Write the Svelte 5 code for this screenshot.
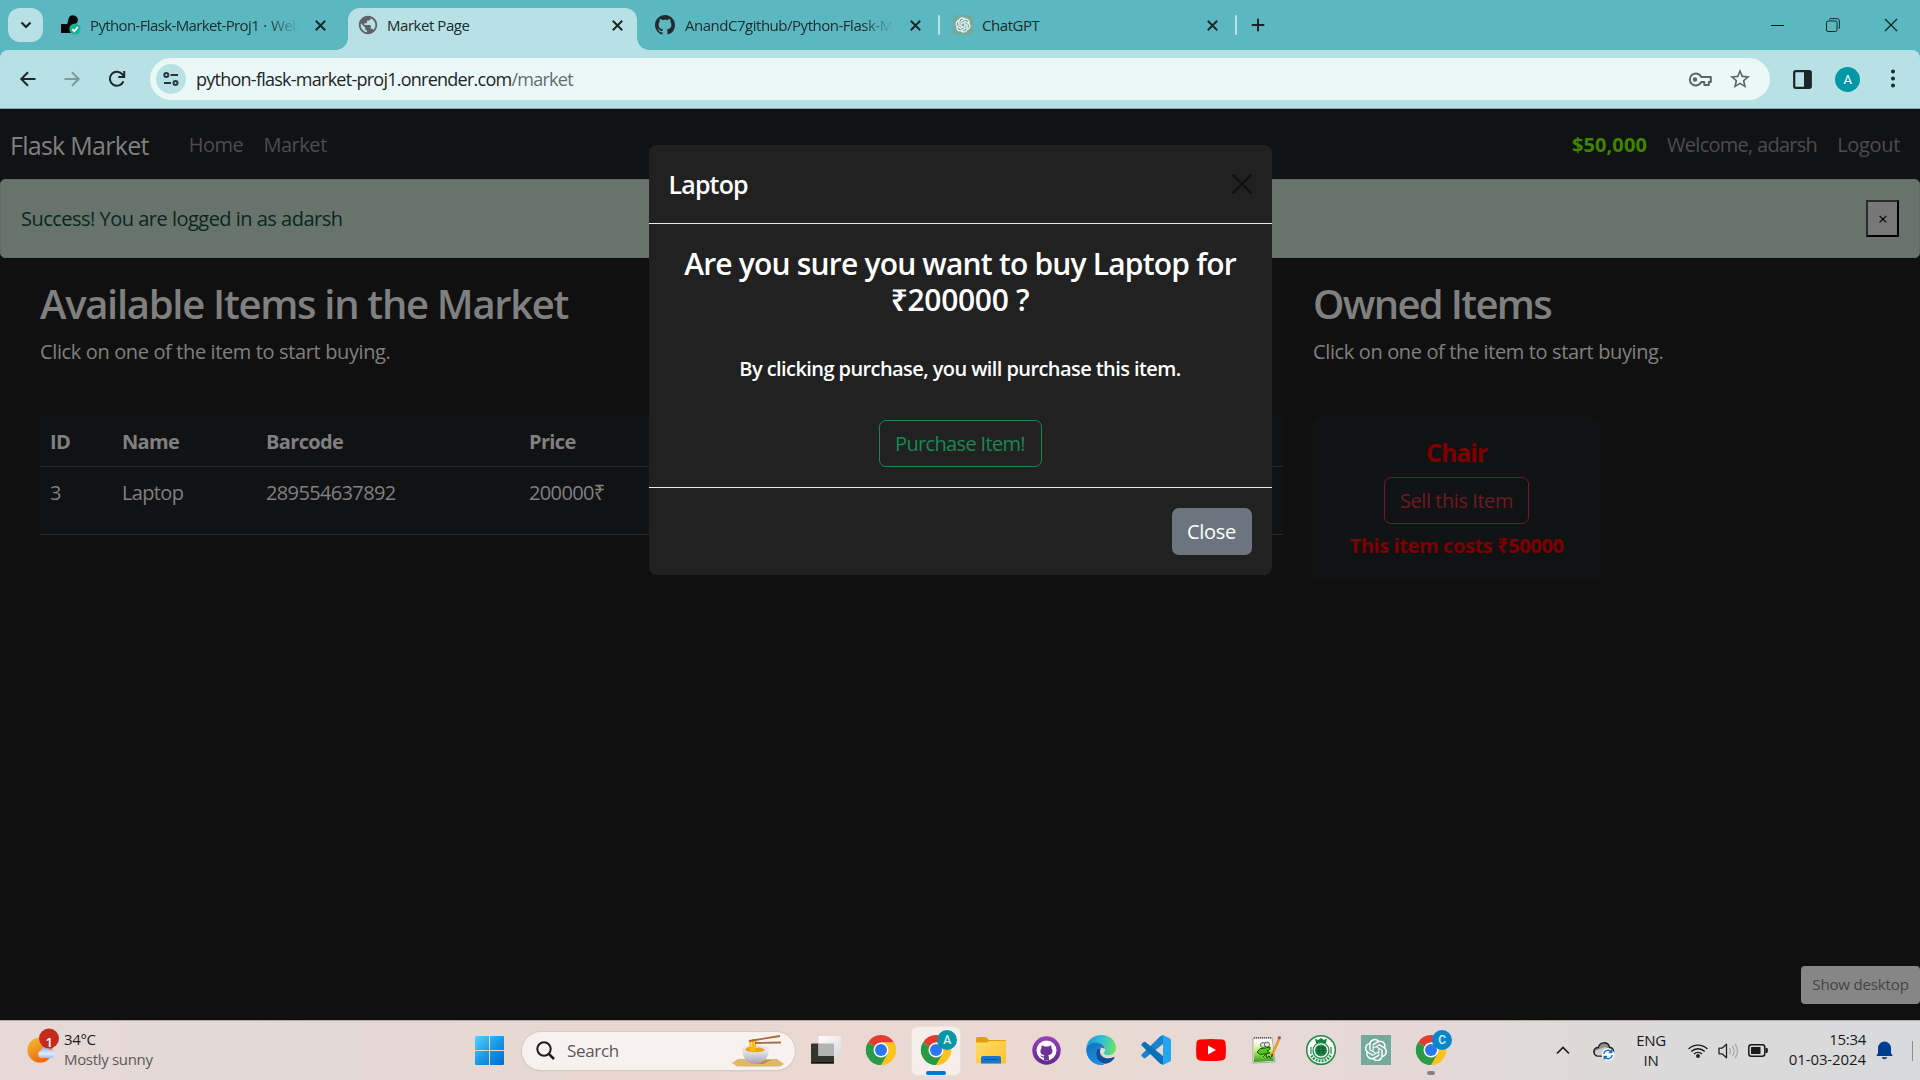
<script>
  const githubMark =
    'M8 0C3.58 0 0 3.58 0 8c0 3.54 2.29 6.53 5.47 7.59.4.07.55-.17.55-.38 0-.19-.01-.82-.01-1.49-2.01.37-2.53-.49-2.69-.94-.09-.23-.48-.94-.82-1.13-.28-.15-.68-.52-.01-.53.63-.01 1.08.58 1.23.82.72 1.21 1.87.87 2.33.66.07-.52.28-.87.51-1.07-1.78-.2-3.64-.89-3.64-3.95 0-.87.31-1.59.82-2.15-.08-.2-.36-1.02.08-2.12 0 0 .67-.21 2.2.82.64-.18 1.32-.27 2-.27s1.36.09 2 .27c1.53-1.04 2.2-.82 2.2-.82.44 1.1.16 1.92.08 2.12.51.56.82 1.27.82 2.15 0 3.07-1.87 3.75-3.65 3.95.29.25.54.73.54 1.48 0 1.07-.01 1.93-.01 2.2 0 .21.15.46.55.38A8.01 8.01 0 0 0 16 8c0-4.42-3.58-8-8-8z';
  const knot =
    'M22.2819 9.8211a5.9847 5.9847 0 0 0-.5157-4.9108 6.0462 6.0462 0 0 0-6.5098-2.9A6.0651 6.0651 0 0 0 4.9807 4.1818a5.9847 5.9847 0 0 0-3.9977 2.9 6.0462 6.0462 0 0 0 .7427 7.0966 5.98 5.98 0 0 0 .511 4.9107 6.051 6.051 0 0 0 6.5146 2.9001A5.9847 5.9847 0 0 0 13.2599 24a6.0557 6.0557 0 0 0 5.7718-4.2058 5.9894 5.9894 0 0 0 3.9977-2.9001 6.0557 6.0557 0 0 0-.7475-7.0729zm-9.022 12.6081a4.4755 4.4755 0 0 1-2.8764-1.0408l.1419-.0804 4.7783-2.7582a.7948.7948 0 0 0 .3927-.6813v-6.7369l2.02 1.1686a.071.071 0 0 1 .038.052v5.5826a4.504 4.504 0 0 1-4.4945 4.4944zm-9.6607-4.1254a4.4708 4.4708 0 0 1-.5346-3.0137l.142.0852 4.783 2.7582a.7712.7712 0 0 0 .7806 0l5.8428-3.3685v2.3324a.0804.0804 0 0 1-.0332.0615L9.74 19.9502a4.4992 4.4992 0 0 1-6.1408-1.6464zM2.3408 7.8956a4.485 4.485 0 0 1 2.3655-1.9728V11.6a.7664.7664 0 0 0 .3879.6765l5.8144 3.3543-2.0201 1.1685a.0757.0757 0 0 1-.071 0l-4.8303-2.7865A4.504 4.504 0 0 1 2.3408 7.872zm16.5963 3.8558L13.1038 8.364 15.1192 7.2a.0757.0757 0 0 1 .071 0l4.8303 2.7913a4.4944 4.4944 0 0 1-.6765 8.1042v-5.6772a.79.79 0 0 0-.407-.667zm2.0107-3.0231l-.142-.0852-4.7735-2.7818a.7759.7759 0 0 0-.7854 0L9.409 9.2297V6.8974a.0662.0662 0 0 1 .0284-.0615l4.8303-2.7866a4.4992 4.4992 0 0 1 6.6802 4.66zM8.3065 12.863l-2.02-1.1638a.0804.0804 0 0 1-.038-.0567V6.0742a4.4992 4.4992 0 0 1 7.3757-3.4537l-.142.0805L8.704 5.459a.7948.7948 0 0 0-.3927.6813zm1.0976-2.3654l2.602-1.4998 2.6069 1.4998v2.9994l-2.5974 1.4997-2.6067-1.4997Z';

  const tabs = [
    { title: 'Python-Flask-Market-Proj1 · Web', icon: 'render', kind: 'first' },
    { title: 'Market Page', icon: 'globe', kind: 'active' },
    { title: 'AnandC7github/Python-Flask-M', icon: 'github', kind: 'third' },
    { title: 'ChatGPT', icon: 'gpt', kind: 'fourth' }
  ];
  const items = [{ id: 3, name: 'Laptop', barcode: '289554637892', price: '200000₹' }];
  const owned = [{ name: 'Chair', price: 50000 }];
  const apps = ['taskview', 'chrome', 'chromeA', 'folder', 'desktop', 'edge', 'code', 'youtube', 'notepad', 'seal', 'gpt', 'chromeC'];
</script>

{#snippet cross(size, weight)}
  <svg width={size} height={size} viewBox="0 0 10 10"><path d="M.7.7l8.6 8.6M9.3.7L.7 9.3" fill="none" stroke="currentColor" stroke-width={weight} /></svg>
{/snippet}

{#snippet chrome()}
  <svg width="30" height="30" viewBox="0 0 48 48">
    <path d="M24 24L3.2 12A24 24 0 0 1 44.8 12H24z" fill="#e33b2e" />
    <path d="M24 24L44.8 12A24 24 0 0 1 24 48z" fill="#fcc31e" />
    <path d="M24 24L24 48A24 24 0 0 1 3.2 12z" fill="#2a9a48" />
    <path d="M24 12h20.8A24 24 0 0 1 24 48l10.4-18z" fill="#fcc31e" />
    <path d="M13.6 30L3.2 12A24 24 0 0 0 24 48l10.4-18z" fill="#2a9a48" />
    <circle cx="24" cy="24" r="12" fill="#fff" />
    <circle cx="24" cy="24" r="9.6" fill="#2a77ee" />
  </svg>
{/snippet}

<div class="screen">
  <div class="tabstrip">
    <button class="tabsearch" aria-label="Search tabs">
      <svg width="12" height="8" viewBox="0 0 12 8"><path d="M1.5 1.5L6 6l4.5-4.5" fill="none" stroke="#1c2526" stroke-width="2.2" /></svg>
    </button>
    {#each tabs as tab}
      <div class="tab {tab.kind}">
        <span class="favicon">
          {#if tab.icon === 'render'}
            <svg width="20" height="20" viewBox="0 0 20 20">
              <path d="M0 9h6.2C7 7.500 7 5.600 7.500 3.800A4.800 4.800 0 0 1 16.900 5c0 2.500-2 4.300-4.400 4.800V18H0z" fill="#050707" />
              <circle cx="14" cy="14" r="5.600" fill="#19b394" />
              <path d="M11.300 14.200l2 2 3.500-4.200" fill="none" stroke="#fff" stroke-width="1.700" />
            </svg>
          {:else if tab.icon === 'globe'}
            <svg width="22" height="22" viewBox="0 0 24 24"><circle cx="12" cy="12" r="9" fill="#b7e1e4" /><path fill="#5f6368" d="M12 2C6.480 2 2 6.480 2 12s4.480 10 10 10 10-4.480 10-10S17.520 2 12 2zm-1 17.930c-3.950-.49-7-3.850-7-7.930 0-.62.08-1.210.21-1.790L9 15v1c0 1.100.9 2 2 2v1.930zm6.900-2.540c-.26-.81-1-1.390-1.900-1.390h-1v-3c0-.55-.45-1-1-1H8v-2h2c.55 0 1-.45 1-1V7h2c1.100 0 2-.9 2-2v-.41c2.930 1.190 5 4.060 5 7.410 0 2.080-.8 3.970-2.100 5.390z" /></svg>
          {:else if tab.icon === 'github'}
            <svg width="20" height="20" viewBox="0 0 16 16"><path d={githubMark} fill="#24292f" /></svg>
          {:else}
            <svg width="20" height="20" viewBox="0 0 40 40"><rect width="40" height="40" rx="6" fill="#74aa9c" /><g transform="translate(5 5) scale(1.250)"><path d={knot} fill="#fff" stroke="#fff" stroke-width=".4" /></g></svg>
          {/if}
        </span>
        <span class="tabtitle">{tab.title}</span>
        <span class="tabclose">{@render cross(11, 1.7)}</span>
      </div>
    {/each}
    <span class="newtab"><svg width="14" height="14" viewBox="0 0 14 14"><path d="M7 .7v12.600M.7 7h12.600" stroke="#1c2526" stroke-width="2" /></svg></span>
    <div class="winbuttons">
      <svg width="13" height="13" viewBox="0 0 13 13"><path d="M0 6.500h13" stroke="#111" /></svg>
      <svg width="14" height="14" viewBox="0 0 14 14"><g fill="none" stroke="#17292b"><rect x=".5" y="3" width="10.500" height="10.500" rx="1.500" /><path d="M3 1.500C3.500.8 4 .6 5 .6h6A2.500 2.500 0 0 1 13.400 3v6c0 1-.2 1.500-.9 2" /></g></svg>
      <span class="winclose">{@render cross(14, 0.85)}</span>
    </div>
  </div>

  <div class="toolbar">
    <div class="nav">
      <svg width="16" height="16" viewBox="0 0 16 16"><path d="M15.500 8H1.700M8 1.300L1.300 8 8 14.700" fill="none" stroke="#1f2829" stroke-width="2" /></svg>
      <svg width="16" height="16" viewBox="0 0 16 16"><path d="M.5 8h13.800M8 1.300L14.700 8 8 14.700" fill="none" stroke="#7a9c9f" stroke-width="2" /></svg>
      <svg width="18" height="18" viewBox="0 0 18 18"><path d="M15.400 11.300A7 7 0 1 1 14.600 4.700L16 6.300M16.200 1v5.900h-5.900" fill="none" stroke="#1f2829" stroke-width="2" /></svg>
    </div>
    <div class="omnibox">
      <span class="siteinfo">
        <svg width="16" height="14" viewBox="0 0 16 14"><g fill="none" stroke="#26393b" stroke-width="2"><circle cx="3.300" cy="3" r="2" /><path d="M7.500 3H15M1 11h7" /><circle cx="12.500" cy="11" r="2" /></g></svg>
      </span>
      <span class="url">python-flask-market-proj1.onrender.com<i>/market</i></span>
      <svg class="key" width="24" height="15" viewBox="0 0 24 15"><g fill="none" stroke="#5b6668" stroke-width="2"><path d="M13.300 5H22.800v5h-2v3h-4.500v-3h-3A6 6 0 1 1 13.300 5z" stroke-linejoin="round" /></g><circle cx="7" cy="7.500" r="2.200" fill="#5b6668" /></svg>
      <svg class="star" width="24" height="24" viewBox="0 0 24 24"><path fill="#5b6668" d="M22 9.240l-7.190-.62L12 2 9.190 8.630 2 9.240l5.460 4.730L5.820 21 12 17.270 18.180 21l-1.630-7.030L22 9.240zM12 15.400l-3.760 2.270 1-4.280-3.320-2.880 4.380-.38L12 6.100l1.710 4.040 4.380.38-3.320 2.880 1 4.280L12 15.400z" /></svg>
    </div>
    <svg class="panel" width="19" height="19" viewBox="0 0 19 19"><rect x="1.200" y="1.200" width="16.600" height="16.600" rx="1.500" fill="none" stroke="#1f2427" stroke-width="2.200" /><path d="M11 1h7v17h-7z" fill="#1f2427" /></svg>
    <span class="avatar">A</span>
    <svg class="dots" width="4" height="20" viewBox="0 0 4 20" fill="#1f2829"><circle cx="2" cy="2.500" r="2" /><circle cx="2" cy="9.500" r="2" /><circle cx="2" cy="16.500" r="2" /></svg>
  </div>

  <div class="page">
    <nav class="navbar">
      <a class="brand" href="#home">Flask Market</a>
      <a href="#home">Home</a>
      <a href="#market">Market</a>
      <span class="funds">$50,000</span>
      <a class="welcome" href="#user">Welcome, adarsh</a>
      <a class="logout" href="#logout">Logout</a>
    </nav>
    <div class="alert">
      <span>Success! You are logged in as adarsh</span>
      <button aria-label="Dismiss">×</button>
    </div>
    <div class="columns">
      <section class="available">
        <h2>Available Items in the Market</h2>
        <p>Click on one of the item to start buying.</p>
        <div class="table">
          <div class="row head"><span>ID</span><span>Name</span><span>Barcode</span><span>Price</span></div>
          {#each items as item}
            <div class="row"><span>{item.id}</span><span>{item.name}</span><span>{item.barcode}</span><span>{item.price}</span></div>
          {/each}
        </div>
      </section>
      <section class="owned">
        <h2>Owned Items</h2>
        <p>Click on one of the item to start buying.</p>
        {#each owned as item}
          <div class="card">
            <h5>{item.name}</h5>
            <button>Sell this Item</button>
            <strong>This item costs ₹{item.price}</strong>
          </div>
        {/each}
      </section>
    </div>

    <div class="overlay">
      <div class="dialog">
        <header>
          <h5>Laptop</h5>
          <span class="dismiss"><svg width="20" height="20" viewBox="0 0 20 20"><path d="M1.300 1.300l17.400 17.400M18.700 1.300L1.300 18.700" stroke="#101010" stroke-width="2.500" stroke-linecap="round" /></svg></span>
        </header>
        <div class="body">
          <h4><span class="question">Are you sure you want to buy Laptop for</span><span>₹200000 ?</span></h4>
          <h6>By clicking purchase, you will purchase this item.</h6>
          <button>Purchase Item!</button>
        </div>
        <footer><button>Close</button></footer>
      </div>
    </div>
    <div class="tooltip">Show desktop</div>
  </div>

  <div class="taskbar">
    <div class="weather">
      <svg width="36" height="38" viewBox="0 0 36 38">
        <defs>
          <linearGradient id="sun" x1="0" y1="0" x2=".6" y2="1"><stop offset="0" stop-color="#f3c234" /><stop offset="1" stop-color="#ee6410" /></linearGradient>
          <linearGradient id="cloud" x1="0" y1="0" x2="0" y2="1"><stop offset="0" stop-color="#8fb5ee" /><stop offset=".6" stop-color="#e2ebfa" /><stop offset="1" stop-color="#9bbcf0" /></linearGradient>
        </defs>
        <circle cx="15" cy="23" r="12.600" fill="url(#sun)" />
        <path d="M16 31a4 4 0 0 1 0-7.600c.8-3.600 7-4.400 9-.6 3.500-.8 5.500 1.700 5 4.500-.3 2.400-2 3.700-4 3.700z" fill="url(#cloud)" />
        <circle cx="24" cy="11.500" r="10" fill="#c42b1c" />
      </svg>
      <b>1</b>
      <div class="forecast"><span>34°C</span><small>Mostly sunny</small></div>
    </div>
    <svg class="start" width="30" height="30" viewBox="0 0 30 30">
      <defs><linearGradient id="win" gradientUnits="userSpaceOnUse" x1="0" y1="0" x2="30" y2="30"><stop offset="0" stop-color="#55d3fd" /><stop offset=".5" stop-color="#1897e6" /><stop offset="1" stop-color="#0068cc" /></linearGradient></defs>
      <path d="M1 0h13v14H0V1a1 1 0 0 1 1-1zM15 0h13a1 1 0 0 1 1 1v13H15zM0 15h14v14H1a1 1 0 0 1-1-1zM15 15h14v13a1 1 0 0 1-1 1H15z" fill="url(#win)" />
    </svg>
    <div class="search">
      <svg width="19" height="19" viewBox="0 0 19 19"><circle cx="8" cy="8" r="6.700" fill="none" stroke="#1d1d1d" stroke-width="2" /><path d="M12.800 12.800L18 18" stroke="#1d1d1d" stroke-width="2.600" /></svg>
      <span>Search</span>
      <svg class="bowl" width="54" height="32" viewBox="0 0 54 32">
        <defs><linearGradient id="bowl" x1="0" y1="0" x2="0" y2="1"><stop offset="0" stop-color="#f6f5fa" /><stop offset="1" stop-color="#aaa5b5" /></linearGradient></defs>
        <path d="M7 24h39l7 5-4 2.500H6L1 28z" fill="#dfb768" />
        <path d="M25 26l15-1-8 4-14-1z" fill="#b98743" />
        <path d="M11 13h27c0 8-4 14-9 15h-9c-5-1-9-7-9-15z" fill="url(#bowl)" />
        <ellipse cx="24.500" cy="14" rx="13.500" ry="4" fill="#e7e4ec" />
        <path d="M14 15c2-4 7-4 9-2 4-1 8-1 11 2-3 3-17 3-20 0z" fill="#e9a60f" />
        <path d="M19 5l1 11M22 4v12M25 5l-2 11M18 7c3-2 6-1 8 1" stroke="#f7bd1d" stroke-width="2" fill="none" />
        <path d="M18 6L49 1M24 8l26-.5" stroke="#b06a35" stroke-width="1.800" />
      </svg>
    </div>
    <div class="apps">
      {#each apps as app}
        <span class="app {app}">
          {#if app === 'taskview'}
            <svg width="30" height="30" viewBox="0 0 30 30"><defs><linearGradient id="tv" x1="0" y1="0" x2="1" y2="1"><stop offset="0" stop-color="#fff" /><stop offset="1" stop-color="#d9d9d9" /></linearGradient></defs><rect y="8.500" width="23" height="20" rx="1" fill="#343432" /><path d="M0 27h23v1.500H0z" fill="#111" /><rect x="7.500" y="1" width="22.500" height="20" rx="1" fill="url(#tv)" /><path d="M7.500 8.500H22a1 1 0 0 1 1 1V21H7.500z" fill="#b3b3b1" /></svg>
          {:else if app === 'chrome'}
            {@render chrome()}
          {:else if app === 'chromeA' || app === 'chromeC'}
            {@render chrome()}
            <em>{app.slice(-1)}</em>
          {:else if app === 'folder'}
            <svg width="30" height="27" viewBox="0 0 30 27"><defs><linearGradient id="fold" x1="0" y1="0" x2="1" y2="1"><stop offset="0" stop-color="#ffdd66" /><stop offset="1" stop-color="#fbc02c" /></linearGradient></defs><path d="M0 1.500Q0 0 1.500 0H10l3 3h16q1 0 1 1v6H0z" fill="#e2a00c" /><path d="M0 5.500h11L13.500 4H30v21.500q0 1-1 1H1q-1 0-1-1z" fill="url(#fold)" /><path d="M5 26.500V21q0-2 2-2h16q2 0 2 2v5.500z" fill="#1578cf" /><path d="M8.500 22.500h13" stroke="#0b4f96" /></svg>
          {:else if app === 'desktop'}
            <svg width="29" height="29" viewBox="0 0 29 29"><defs><linearGradient id="gd" x1="0" y1="0" x2="0" y2="1"><stop offset="0" stop-color="#9741bd" /><stop offset="1" stop-color="#5d2c8d" /></linearGradient></defs><circle cx="14.500" cy="14.500" r="14.200" fill="url(#gd)" /><circle cx="14.500" cy="14.500" r="10" fill="#fff" /><path d="M10 9.200l2.600 1.200h3.800L19 9.200c.8 1.700.4 2.800.4 2.800 2.600 4 0 7-3.200 7.300.8.800.8 2 .8 4.700h-5v-2.400c-2.400.4-3-1.400-4-2 1.800-.3 1.900 1.200 4 .7 0-.5.200-.8.500-1-3.200-.3-5.600-3.300-3-7.300 0 0-.4-1.100.5-2.800z" fill="#6f3296" /></svg>
          {:else if app === 'edge'}
            <svg width="30" height="30" viewBox="0 0 30 30">
              <defs>
                <linearGradient id="e1" x1="0" y1=".3" x2="1" y2=".4"><stop offset="0" stop-color="#2196dc" /><stop offset=".55" stop-color="#33c1d6" /><stop offset="1" stop-color="#6be55a" /></linearGradient>
                <linearGradient id="e2" x1="0" y1="0" x2=".4" y2="1"><stop offset="0" stop-color="#1273bb" /><stop offset="1" stop-color="#1b8ce0" /></linearGradient>
              </defs>
              <path d="M.3 13C1.200 5 7.500 0 15.200 0 24 0 30 6 30 12.800c0 5-3.800 7.500-7.500 7.500-4 0-5.600-1.400-4.300-3 2.300-3 .4-7.600-5.200-8.600C7 7.600 2 10 .3 13z" fill="url(#e1)" />
              <path d="M.2 14C1 10 5 7.500 10 7.700c5.500.2 8.700 3.300 8.700 6.300-4.500-3-8.500 0-8.500 5 0 5.500 4.300 9.600 8.300 10.400C10 32 0 25 .2 14z" fill="url(#e2)" />
              <path d="M11.500 14c-4 6 .6 15 8 14.800 4-.4 7.500-3 9-6 .3-.7-.3-1-.9-.7C22.500 24.700 14.500 23 14 17c-.1-1.500.3-2.700 1-3.600-1.500-.4-2.700 0-3.500.6z" fill="#0f4f9e" />
            </svg>
          {:else if app === 'code'}
            <svg width="30" height="30" viewBox="0 0 30 30"><path d="M22 0l-3 1.600L.8 19.200q-1 1 0 2l2 1.700q.7.600 1.600 0L22 9z" fill="#1a83cc" /><path d="M22 30l-3-1.600L.8 10.800q-1-1 0-2l2-1.700q.7-.6 1.600 0L22 21z" fill="#0d70b8" /><path d="M22 0l7 3.400q1 .5 1 1.600v20q0 1.100-1 1.600L22 30z" fill="#24a6ef" /></svg>
          {:else if app === 'youtube'}
            <svg width="30" height="22" viewBox="0 0 30 22"><path d="M4 .6q11-1 22 0 3.300.3 3.600 3.600.7 6.800 0 13.600-.3 3.300-3.600 3.600-11 1-22 0Q.7 21.100.4 17.800q-.7-6.800 0-13.600Q.7.9 4 .6z" fill="#f00" /><path d="M12 6.500v9l8-4.500z" fill="#fff" /></svg>
          {:else if app === 'notepad'}
            <svg width="30" height="30" viewBox="0 0 30 30"><defs><linearGradient id="np" x1="0" y1="0" x2="0" y2="1"><stop offset="0" stop-color="#fff" /><stop offset=".5" stop-color="#b9ec62" /><stop offset="1" stop-color="#2f9b14" /></linearGradient></defs><path d="M2 3h19l3 24-22 1z" fill="#f8f8f6" stroke="#888" stroke-width=".7" /><path d="M3 6h18l2 20-20 1z" fill="url(#np)" /><path d="M3 2.800h18" stroke="#555" stroke-width="1.600" stroke-dasharray="1 1" /><path d="M6 17q3-5 8-4l5-1q1 3-3 4l3 2-6 1q-4 2-7-2z" fill="#55c91b" stroke="#1d4b12" /><circle cx="12" cy="10" r="2.500" fill="#dfe9dd" stroke="#444" stroke-width=".8" /><circle cx="16" cy="9.500" r="2.500" fill="#dfe9dd" stroke="#444" stroke-width=".8" /><path d="M12 22l3-3 1 4 2-2 2 3" fill="none" stroke="#174510" /><path d="M28.500 3L21 20" stroke="#e79b2d" stroke-width="2.600" /><path d="M28.800 1.500l-1 2.500" stroke="#a44f4f" stroke-width="3" /><path d="M21.500 19l-1 3" stroke="#333" stroke-width="1.500" /></svg>
          {:else if app === 'seal'}
            <svg width="30" height="30" viewBox="0 0 30 30"><circle cx="15" cy="15" r="14.300" fill="#f7faf6" stroke="#1f8a46" stroke-width="1.500" /><path d="M5 12v7M25 12v7" stroke="#2a8d4f" stroke-width="1.200" /><path d="M5.500 20.500a11 11 0 0 0 19 0" fill="none" stroke="#2a8d4f" stroke-width="2.800" stroke-dasharray="1.800 1.200" /><path d="M9 3.500l3 1.500 3-2 3 2 3-1.500-1 4.500H10z" fill="#1b7f40" /><circle cx="15" cy="15.500" r="8" fill="#fff" stroke="#1f8a46" stroke-width="1.300" /><circle cx="15" cy="15.500" r="6" fill="#218849" /><path d="M10 13h10M10 15.500h10M11 18h8M13 11v7M17 11v7" stroke="#0d5c2b" stroke-width="1.100" /></svg>
          {:else if app === 'gpt'}
            <svg width="30" height="30" viewBox="0 0 30 30"><path d="M0 0h30v30H0z" fill="#74aa9c" /><g transform="translate(3.800 3.800) scale(.93)"><path d={knot} fill="#fff" /></g></svg>
          {/if}
        </span>
      {/each}
    </div>
    <div class="tray">
      <svg class="chev" width="14" height="9" viewBox="0 0 14 9"><path d="M1 7.500l6-6 6 6" fill="none" stroke="#1a1a1a" stroke-width="1.600" /></svg>
      <svg class="onedrive" width="22" height="20" viewBox="0 0 22 20"><path d="M5 15a4.300 4.300 0 0 1 .3-8.600C7 .6 15 .2 16.500 6.200c3.600.3 4.600 3.500 3.800 5.800L18 15z" fill="#8f8f8f" stroke="#222" stroke-width="1.500" /><path d="M5 14.500c-3-.6-3.500-3-2.500-4.800L12 6l8 4-2 4.500z" fill="#cfcfcf" /><circle cx="15" cy="13.500" r="6.300" fill="#fff" /><path d="M10.800 13a4.300 4.300 0 0 1 7.700-2M19.200 14a4.300 4.300 0 0 1-7.700 2M18.800 8.500v3h-3M11.200 18.500v-3h3" fill="none" stroke="#1470c4" stroke-width="1.400" /></svg>
      <div class="lang"><span>ENG</span><span>IN</span></div>
      <svg class="wifi" width="20" height="15" viewBox="0 0 20 15"><g fill="none" stroke="#1a1a1a" stroke-width="1.300"><path d="M.6 6a13.300 13.300 0 0 1 18.800 0M3.300 8.500a9.500 9.500 0 0 1 13.400 0M6 11a5.700 5.700 0 0 1 8 0" /></g><circle cx="10" cy="13" r="1.900" fill="#1a1a1a" /></svg>
      <svg class="sound" width="21" height="16" viewBox="0 0 21 16"><path d="M1 5.200h3l4.500-4v13.600l-4.500-4H1z" fill="none" stroke="#222" stroke-width="1.300" stroke-linejoin="round" /><g fill="none" stroke="#a9a9a9" stroke-width="1.300"><path d="M11.500 5q2 3 0 6M14.300 3q3.600 5 0 10M17 1q5 7 0 14" /></g></svg>
      <svg class="battery" width="20" height="13" viewBox="0 0 20 13"><rect x=".8" y=".8" width="16" height="11.400" rx="2.500" fill="none" stroke="#1a1a1a" stroke-width="1.500" /><rect x="3" y="3" width="9.500" height="7" rx=".6" fill="#1a1a1a" /><path d="M17.500 4h1q1.300 0 1.300 1.300v2.400Q19.800 9 18.500 9h-1z" fill="#1a1a1a" /></svg>
      <div class="clock"><span>15:34</span><span class="date">01-03-2024</span></div>
      <svg class="bell" width="17" height="19" viewBox="0 0 17 19"><path d="M2 7a6.500 6.500 0 0 1 13 0v5l1.700 3H.3L2 12zM5.700 16.200h5.600a2.900 2.900 0 0 1-5.600 0z" fill="#003e92" /></svg>
      <i class="edgeline"></i>
    </div>
  </div>
</div>

<style>
  :global(body) { margin: 0; overflow: hidden; }
  .screen { width: 1920px; height: 1080px; display: flex; flex-direction: column; overflow: hidden; background: #101010; font-family: 'Open Sans', 'Noto Sans', sans-serif; letter-spacing: -0.32px; }
  .screen * { box-sizing: border-box; }
  svg { display: block; flex: none; overflow: visible; }
  button { font: inherit; letter-spacing: inherit; padding: 0; }
  a { text-decoration: none; color: inherit; }
  span, a, strong { white-space: nowrap; }

  .tabstrip { height: 50px; flex: none; display: flex; align-items: flex-start; padding-left: 8px; background: #5bb8c1; }
  .tabsearch { width: 35px; height: 34px; margin: 8px 5px 0 0; border: 0; border-radius: 12px; background: #b7e1e4; display: flex; align-items: center; justify-content: center; }
  .tab { position: relative; height: 42px; margin-top: 8px; display: flex; align-items: center; padding: 0 15px 8px 13px; font-size: 15px; color: #1b2a2c; letter-spacing: -0.03em; }
  .favicon { width: 20px; display: flex; justify-content: center; margin-right: 9px; }
  .tabtitle { flex: 1; overflow: hidden; line-height: 22px; }
  .tabclose { margin-left: 16px; color: #1c2526; }
  .first { width: 300px; padding-right: 22px; letter-spacing: -0.042em; word-spacing: 1px; }
  .first .tabtitle, .third .tabtitle { -webkit-mask-image: linear-gradient(90deg, #000 calc(100% - 32px), transparent); mask-image: linear-gradient(90deg, #000 calc(100% - 32px), transparent); }
  .active { width: 289px; padding-left: 10px; padding-right: 14px; background: #b7e1e4; border-radius: 12px 12px 0 0; }
  .active .favicon { margin-right: 9px; }
  .active::before, .active::after { content: ''; position: absolute; bottom: 0; width: 12px; height: 12px; }
  .active::before { left: -12px; background: radial-gradient(circle at 0 0, transparent 11.500px, #b7e1e4 12px); }
  .active::after { right: -12px; background: radial-gradient(circle at 100% 0, transparent 11.500px, #b7e1e4 12px); }
  .third { width: 303px; padding-left: 18px; padding-right: 19px; letter-spacing: -0.032em; }
  .third .favicon { margin-right: 10px; }
  .fourth { width: 297px; padding-left: 13px; padding-right: 19px; }
  .third::after, .fourth::after { content: ''; position: absolute; right: 0; top: 7px; width: 2px; height: 20px; border-radius: 1px; background: #b7e1e4; }
  .newtab { margin: 18px 0 0 14px; }
  .winbuttons { margin: 18px 22px 0 auto; display: flex; gap: 42px; align-items: center; color: #102022; }
  .winbuttons .winclose { margin-left: 2px; }

  .toolbar { height: 59px; flex: none; display: flex; align-items: center; background: #b7e1e4; border-radius: 8px 8px 0 0; border-bottom: 1px solid #83a9ac; box-shadow: 0 -8px 0 #5bb8c1; padding-left: 20px; position: relative; clip-path: inset(0); }
  .nav { display: flex; align-items: center; gap: 28px; width: 130px; }
  .omnibox { width: 1620px; height: 42px; border-radius: 21px; background: #ebf8f8; display: flex; align-items: center; padding-left: 6px; padding-right: 18px; }
  .siteinfo { width: 30px; height: 30px; border-radius: 50%; background: #b7e1e4; display: flex; align-items: center; justify-content: center; margin-right: 10px; }
  .url { flex: 1; font-size: 18px; color: #1f2427; letter-spacing: -0.0415em; }
  .url i { font-style: normal; color: #5f6e70; }
  .key { margin-right: 16px; }
  .panel { margin-left: 23px; }
  .avatar { width: 25px; height: 25px; border-radius: 50%; background: #0097a7; color: #fff; font: 13px/25px 'Roboto', sans-serif; text-align: center; margin-left: 23px; }
  .dots { margin-left: 31px; }

  .page { position: relative; height: 911px; flex: none; font-size: 20px; line-height: 30px; color: #808080; }
  .navbar { height: 70px; background: #101214; display: flex; align-items: center; padding: 2px 20px 0 10px; color: #4c4d4e; letter-spacing: -0.45px; }
  .navbar a { margin-right: 20px; }
  .navbar .brand { font-size: 25px; color: #808080; margin-right: 40px; letter-spacing: -0.029em; }
  .navbar .funds { margin-left: auto; margin-right: 20px; font-weight: 700; color: #3f8500; letter-spacing: 0.006em; }
  .navbar .welcome { letter-spacing: -0.036em; }
  .navbar .logout { margin-right: 0; letter-spacing: -0.016em; }
  .alert { height: 79px; border: 1px solid #5d6e66; border-radius: 5px; background: #69736e; display: flex; align-items: center; justify-content: space-between; padding: 0 20px; color: #08281a; letter-spacing: -0.0255em; font-size: 20px; }
  .alert button { width: 33px; height: 37px; border: 2px solid; border-color: #2a2a2a #000 #000 #2a2a2a; background: #787878; color: #000; font-size: 17px; line-height: 33px; }
  .columns { display: flex; padding: 22px 0 0 40px; }
  .available { width: 1273px; }
  h2 { margin: 0 0 9px; font-size: 40px; line-height: 48px; font-weight: 600; white-space: nowrap; letter-spacing: -0.0325em; }
  .owned h2 { letter-spacing: -0.042em; }
  p { margin: 0; letter-spacing: -0.0185em; }
  .table { width: 1243px; margin-top: 49px; background: #101214; }
  .row { display: grid; grid-template-columns: 72px 144px 263px 1fr; padding: 10px 10px 35px; border-bottom: 1px solid #272a2c; line-height: 32px; height: 68px; letter-spacing: -0.032em; }
  .head { height: 51px; font-weight: 700; }
  .card { width: 287px; height: 163px; margin-top: 50px; border-radius: 5px; background: #101214; display: flex; flex-direction: column; align-items: center; padding-top: 20px; color: #800000; }
  .card h5 { margin: 0 0 10px; font-size: 25px; line-height: 30px; font-weight: 700; letter-spacing: -0.045em; }
  .card button { width: 145px; height: 47px; border: 1px solid #6e1b23; border-radius: 7px; background: none; color: #6e1b23; margin-bottom: 7px; letter-spacing: -0.022em; }
  .card strong { letter-spacing: -0.019em; }

  .overlay { position: absolute; inset: 36px 0 auto; display: flex; justify-content: center; }
  .dialog { width: 623px; height: 430px; border-radius: 8px; background: #212121; color: #fff; display: flex; flex-direction: column; }
  header { height: 79px; border-bottom: 1px solid #e8eaec; display: flex; align-items: center; justify-content: space-between; padding: 0 20px; }
  header h5 { margin: 0; font-size: 25px; font-weight: 600; letter-spacing: -0.034em; }
  .body { height: 264px; border-bottom: 1px solid #e8eaec; display: flex; flex-direction: column; align-items: center; padding-top: 22px; text-align: center; }
  h4 { margin: 0; font-size: 30px; line-height: 36px; font-weight: 600; display: flex; flex-direction: column; align-items: center; }
  .question { letter-spacing: -0.027em; }
  h6 { margin: 39px 0 0; font-size: 20px; line-height: 24px; font-weight: 600; white-space: nowrap; letter-spacing: -0.029em; }
  .body button { width: 163px; height: 47px; margin-top: 39px; border: 1px solid #198754; border-radius: 7px; background: none; color: #198754; letter-spacing: -0.033em; }
  footer { padding: 20px; display: flex; justify-content: flex-end; }
  footer button { width: 80px; height: 47px; border: 0; border-radius: 7px; background: #6c757d; color: #fff; }
  .tooltip { position: absolute; right: 0; bottom: 16px; width: 119px; height: 38px; border-radius: 4px; background: #868686; color: #444; font-size: 15px; line-height: 37px; text-align: center; letter-spacing: -0.01em; }

  .taskbar { height: 60px; flex: none; border-top: 1px solid #b5aaa7; background: linear-gradient(90deg, #e5dad7 0%, #e2d8d5 18%, #e9d8d2 30%, #e9d9d2 55%, #e4d9d8 75%, #dadada 88%, #d9dadc 100%); display: flex; align-items: center; font-size: 15px; color: #1a1a1a; }
  .weather { position: relative; width: 475px; display: flex; align-items: center; padding-left: 25px; }
  .weather svg { margin-top: -10px; }
  .weather b { position: absolute; left: 44px; top: 1px; width: 10px; font-size: 13px; line-height: 16px; font-weight: 600; color: #fff; text-align: center; }
  .forecast, .lang, .clock { display: flex; flex-direction: column; line-height: 20px; margin-top: -4px; }
  .lang { margin-top: -2px; }
  .forecast { margin-left: 3px; }
  .forecast small { font-size: 15px; color: #5d5855; }
  .search { width: 273px; height: 38px; margin-left: 17px; border-radius: 19px; background: #f7f2f0; box-shadow: 0 0 0 1px #d8ccc8, 0 1px 1px #a99f9c; display: flex; align-items: center; padding: 0 10px 0 14px; font-size: 17px; color: #5b5857; }
  .search span { flex: 1; margin-left: 12px; }
  .bowl { margin-top: 1px; }
  .apps { display: flex; gap: 7px; margin-left: 7px; }
  .app { position: relative; width: 48px; height: 48px; border-radius: 6px; display: flex; align-items: center; justify-content: center; }
  .app > svg { margin-top: -1px; }
  .chromeA { background: #f5eeeb; box-shadow: 0 0 0 1px #ebe0dc; }
  .chromeA::after, .chromeC::after { content: ''; position: absolute; bottom: 0; width: 20px; height: 4px; border-radius: 2px; background: #0078d4; }
  .chromeC::after { width: 8px; background: #878280; }
  .app em { position: absolute; right: 3px; top: 3px; width: 20px; height: 20px; border-radius: 50%; background: #0897a4; color: #d5f0f2; font: 500 12px/20px 'Roboto', sans-serif; text-align: center; }
  .chromeC em { background: #0a86cd; }
  .tray { flex: 1; display: flex; align-items: center; padding-left: 101px; }
  .onedrive { margin-left: 23px; }
  .lang { width: 40px; margin-left: 16px; text-align: center; align-items: center; }
  .wifi { margin-left: 17px; }
  .sound { margin-left: 10px; }
  .battery { margin-left: 9px; }
  .clock { width: 98px; align-items: flex-end; }
  .date { letter-spacing: -0.1px; }
  .bell { margin-left: 10px; }
  .edgeline { width: 1px; height: 20px; margin-left: 19px; background: #8f8f8f; }
</style>
